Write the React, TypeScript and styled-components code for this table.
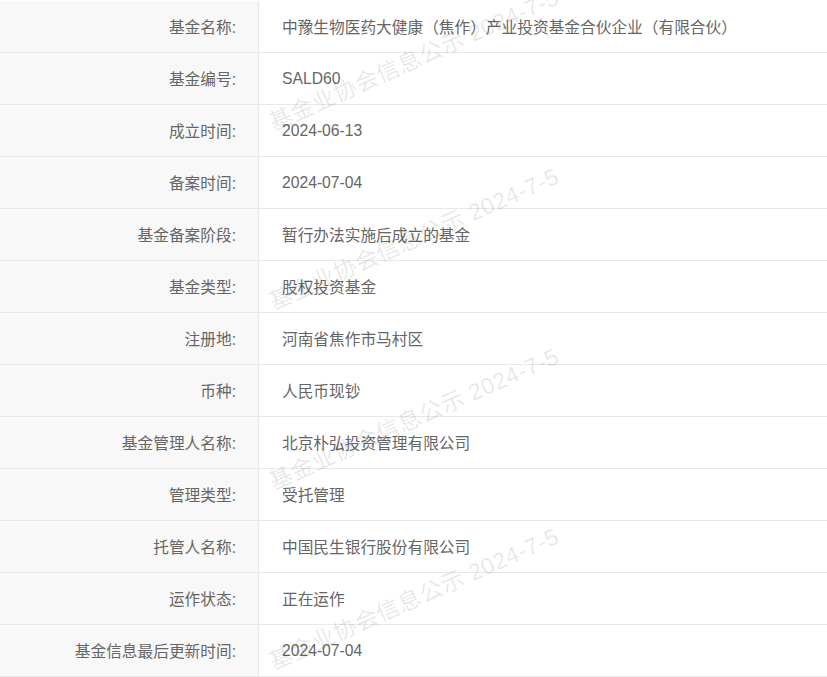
import { createGlobalStyle, styled } from "styled-components";

const GlobalStyle = createGlobalStyle`
	body {
		margin: 0;
		background: #fff;
		font-family: "Liberation Sans", "Noto Sans CJK SC", sans-serif;
	}
`;

const Wrapper = styled.div`
	position: relative;
	width: 827px;
	padding-top: 1px;
	overflow: hidden;
`;

const Row = styled.div`
	display: grid;
	grid-template-columns: 259px 1fr;
	height: 51px;
	border-bottom: 1px solid #e8e8e8;
	font-size: 15.7px;
	color: #666;
`;

const Label = styled.div`
	display: flex;
	align-items: center;
	justify-content: flex-end;
	padding-right: 22px;
	background: #f8f8f8;
	border-right: 1px solid #e8e8e8;
`;

const Value = styled.div`
	display: flex;
	align-items: center;
	padding-left: 23px;
`;

const Watermark = styled.div<{ $top: number }>`
	position: absolute;
	left: 413px;
	top: ${(p) => p.$top}px;
	transform: translate(-50%, -50%) rotate(-24deg);
	white-space: nowrap;
	font-size: 23px;
	letter-spacing: 0.5px;
	color: rgba(0, 0, 0, 0.1);
	pointer-events: none;
	user-select: none;
`;

const rows: [string, string][] = [
	["基金名称:", "中豫生物医药大健康（焦作）产业投资基金合伙企业（有限合伙）"],
	["基金编号:", "SALD60"],
	["成立时间:", "2024-06-13"],
	["备案时间:", "2024-07-04"],
	["基金备案阶段:", "暂行办法实施后成立的基金"],
	["基金类型:", "股权投资基金"],
	["注册地:", "河南省焦作市马村区"],
	["币种:", "人民币现钞"],
	["基金管理人名称:", "北京朴弘投资管理有限公司"],
	["管理类型:", "受托管理"],
	["托管人名称:", "中国民生银行股份有限公司"],
	["运作状态:", "正在运作"],
	["基金信息最后更新时间:", "2024-07-04"],
];

// watermark centres, one every ~180px down the table
const marks = [58, 237, 417, 597];

const App = () => {
	return (
		<>
			<GlobalStyle />
			<Wrapper>
				{rows.map(([label, value]) => (
					<Row key={label}>
						<Label>{label}</Label>
						<Value>{value}</Value>
					</Row>
				))}
				{marks.map((top) => (
					<Watermark key={top} $top={top}>
						基金业协会信息公示 2024-7-5
					</Watermark>
				))}
			</Wrapper>
		</>
	);
};

export default App;
